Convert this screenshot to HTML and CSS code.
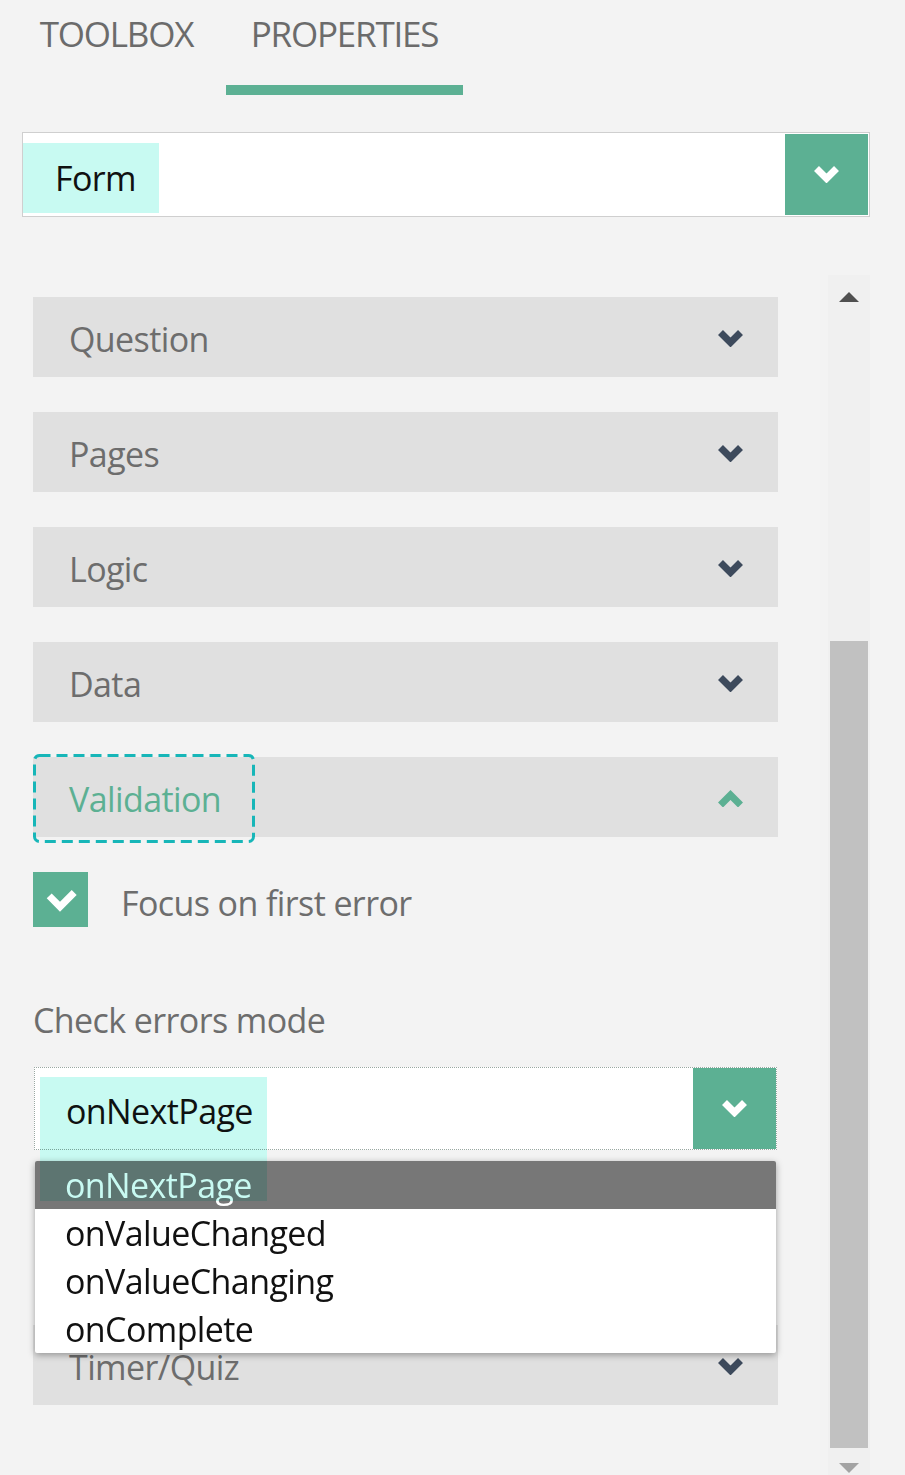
FILE: index.html
```html
<!DOCTYPE html>
<html lang="en">
<head>
<meta charset="utf-8">
<title>Properties</title>
<link rel="stylesheet" href="styles.css">
</head>
<body>
<div class="tabs">
  <div class="tab tab-toolbox">TOOLBOX</div>
  <div class="tab tab-properties active">PROPERTIES</div>
</div>

<div class="obj-select">
  <div class="obj-value"><span class="hl">Form</span></div>
  <div class="sel-btn">
    <svg class="chev" viewBox="0 0 25 17.5" width="25" height="17.5"><polyline points="2.5,2.5 12.5,12.5 22.5,2.5" fill="none" stroke="#ffffff" stroke-width="7" stroke-miterlimit="10"/></svg>
  </div>
</div>

<div class="scroll-area">
  <div class="content">
    <div class="row"><span class="row-title">Question</span><svg class="chev" viewBox="0 0 25 17.5" width="25" height="17.5"><polyline points="2.5,2.5 12.5,12.5 22.5,2.5" fill="none" stroke="#3d4a5c" stroke-width="7" stroke-miterlimit="10"/></svg></div>
    <div class="row"><span class="row-title">Pages</span><svg class="chev" viewBox="0 0 25 17.5" width="25" height="17.5"><polyline points="2.5,2.5 12.5,12.5 22.5,2.5" fill="none" stroke="#3d4a5c" stroke-width="7" stroke-miterlimit="10"/></svg></div>
    <div class="row"><span class="row-title">Logic</span><svg class="chev" viewBox="0 0 25 17.5" width="25" height="17.5"><polyline points="2.5,2.5 12.5,12.5 22.5,2.5" fill="none" stroke="#3d4a5c" stroke-width="7" stroke-miterlimit="10"/></svg></div>
    <div class="row"><span class="row-title">Data</span><svg class="chev" viewBox="0 0 25 17.5" width="25" height="17.5"><polyline points="2.5,2.5 12.5,12.5 22.5,2.5" fill="none" stroke="#3d4a5c" stroke-width="7" stroke-miterlimit="10"/></svg></div>
    <div class="row row-open">
      <span class="row-title">Validation</span>
      <svg class="chev" viewBox="0 0 25 17.5" width="25" height="17.5"><polyline points="2.5,15 12.5,5 22.5,15" fill="none" stroke="#5cb093" stroke-width="7" stroke-miterlimit="10"/></svg>
      <svg class="focus-ring" width="222" height="89" viewBox="0 0 222 89"><rect x="1.5" y="1.5" width="219" height="86" rx="5" ry="5" fill="none" stroke="#17b6b8" stroke-width="3" stroke-dasharray="11 6"/></svg>
    </div>

    <div class="check-row">
      <div class="checkbox">
        <svg viewBox="0 0 55 55" width="55" height="55"><polyline points="16.2,23.9 27,34.7 41.2,20.5" fill="none" stroke="#ffffff" stroke-width="7" stroke-miterlimit="10"/></svg>
      </div>
      <span class="check-label">Focus on first error</span>
    </div>

    <div class="prop-title">Check errors mode</div>

    <div class="mode-select">
      <div class="mode-box">
        <div class="mode-value">onNextPage</div>
        <div class="sel-btn mode-btn">
          <svg class="chev" viewBox="0 0 25 17.5" width="25" height="17.5"><polyline points="2.5,2.5 12.5,12.5 22.5,2.5" fill="none" stroke="#ffffff" stroke-width="7" stroke-miterlimit="10"/></svg>
        </div>
      </div>
      <ul class="dropdown">
        <li class="opt opt-active">onNextPage</li>
        <li class="opt">onValueChanged</li>
        <li class="opt">onValueChanging</li>
        <li class="opt">onComplete</li>
      </ul>
      <div class="text-hl"></div>
    </div>

    <div class="row row-timer"><span class="row-title">Timer/Quiz</span><svg class="chev" viewBox="0 0 25 17.5" width="25" height="17.5"><polyline points="2.5,2.5 12.5,12.5 22.5,2.5" fill="none" stroke="#3d4a5c" stroke-width="7" stroke-miterlimit="10"/></svg></div>
  </div>

  <div class="scrollbar">
    <div class="sb-btn sb-up"><span class="tri-up"></span></div>
    <div class="sb-space"></div>
    <div class="sb-thumb"></div>
    <div class="sb-btn sb-down"><span class="tri-down"></span></div>
  </div>
</div>
</body>
</html>
```
FILE: styles.css
```css
html, body {
  margin: 0;
  padding: 0;
}
body {
  background: #f3f3f3;
  font-family: "Open Sans", "Noto Sans", "DejaVu Sans", sans-serif;
  font-size: 34px;
  letter-spacing: -0.6px;
  color: #6d6d6d;
  width: 905px;
  height: 1475px;
  overflow: hidden;
}

/* Tabs */
.tabs {
  display: flex;
  height: 95px;
}
.tab {
  box-sizing: border-box;
  height: 95px;
  padding-top: 11px;
  line-height: 46px;
  font-size: 35px;
  letter-spacing: -1.2px;
  text-align: center;
  color: #6b6b6b;
}
.tab-toolbox {
  margin-left: 15px;
  width: 203px;
}
.tab-properties {
  margin-left: 8px;
  width: 237px;
}
.tab.active {
  border-bottom: 10px solid #5cb093;
}

/* Object selector */
.obj-select {
  display: flex;
  box-sizing: border-box;
  margin: 37px 35px 0 22px;
  height: 85px;
  border: 1px solid #cfcfcf;
  padding: 1px 1px 1px 0;
  background: #ffffff;
}
.obj-value {
  flex: 1;
  padding-top: 9px;
}
.hl {
  display: inline-block;
  background: #c8faf2;
  color: #111111;
  line-height: 46px;
  padding: 12px 23px 12px 32px;
}
.sel-btn {
  width: 83px;
  background: #5cb093;
  display: flex;
  align-items: center;
  justify-content: center;
}
.chev {
  display: block;
  flex: none;
}

/* Scroll area */
.scroll-area {
  display: flex;
  margin-top: 58px;
  height: 1200px;
}
.content {
  width: 745px;
  margin-left: 33px;
  padding-top: 22px;
}
.row {
  position: relative;
  box-sizing: border-box;
  height: 80px;
  margin-bottom: 35px;
  padding: 3px 35px 0 36px;
  background: #e0e0e0;
  display: flex;
  align-items: center;
  justify-content: space-between;
  line-height: 46px;
}
.row-title {
  color: #6d6d6d;
}
.row-open .row-title {
  color: #5cb093;
}
.focus-ring {
  position: absolute;
  left: 0;
  top: -3px;
}

/* Checkbox */
.check-row {
  display: flex;
  align-items: flex-start;
  height: 55px;
}
.checkbox {
  width: 55px;
  height: 55px;
  background: #5cb093;
  flex: none;
}
.checkbox svg {
  display: block;
}
.check-label {
  margin-left: 33px;
  margin-top: 8px;
  line-height: 46px;
  color: #6d6d6d;
}

.prop-title {
  margin-top: 70px;
  line-height: 46px;
  color: #6d6d6d;
}

/* Mode select */
.mode-select {
  position: relative;
  z-index: 5;
  margin-top: 24px;
  margin-left: 1px;
  width: 743px;
}
.mode-box {
  display: flex;
  box-sizing: border-box;
  height: 83px;
  border: 1px dotted #9aa8a2;
  background: #ffffff;
}
.mode-value {
  flex: 1;
  padding: 4px 0 0 31px;
  display: flex;
  align-items: center;
  line-height: 46px;
  color: #111111;
}
.mode-btn {
  width: 83px;
}
.dropdown {
  position: absolute;
  z-index: 1;
  left: 1px;
  top: 94px;
  width: 741px;
  margin: 0;
  padding: 0;
  list-style: none;
  background: #ffffff;
  border-radius: 2px;
  box-shadow: 0 2px 7px rgba(0, 0, 0, 0.35);
  overflow: hidden;
}
.opt {
  height: 48px;
  line-height: 48px;
  padding-left: 30px;
  color: #111111;
}
.opt-active {
  background: #777777;
  color: #ffffff;
}
.text-hl {
  position: absolute;
  z-index: 2;
  left: 6px;
  top: 10px;
  width: 227px;
  height: 124px;
  background: #c8faf2;
  mix-blend-mode: multiply;
}

.row-timer {
  margin-top: 175px;
  margin-bottom: 0;
}

/* Scrollbar */
.scrollbar {
  width: 42px;
  margin-left: 50px;
  background: #f0f0f0;
  display: flex;
  flex-direction: column;
}
.sb-btn {
  display: flex;
  justify-content: center;
  box-sizing: border-box;
}
.sb-up {
  height: 42px;
  padding-top: 17px;
}
.sb-down {
  height: 27px;
  padding-top: 15px;
}
.sb-space {
  flex: 1;
}
.sb-thumb {
  height: 807px;
  margin: 0 2px;
  background: #c1c1c1;
}
.tri-up {
  width: 0;
  height: 0;
  border-left: 10px solid transparent;
  border-right: 10px solid transparent;
  border-bottom: 10px solid #505050;
}
.tri-down {
  width: 0;
  height: 0;
  border-left: 10px solid transparent;
  border-right: 10px solid transparent;
  border-top: 10px solid #a3a3a3;
}
```
